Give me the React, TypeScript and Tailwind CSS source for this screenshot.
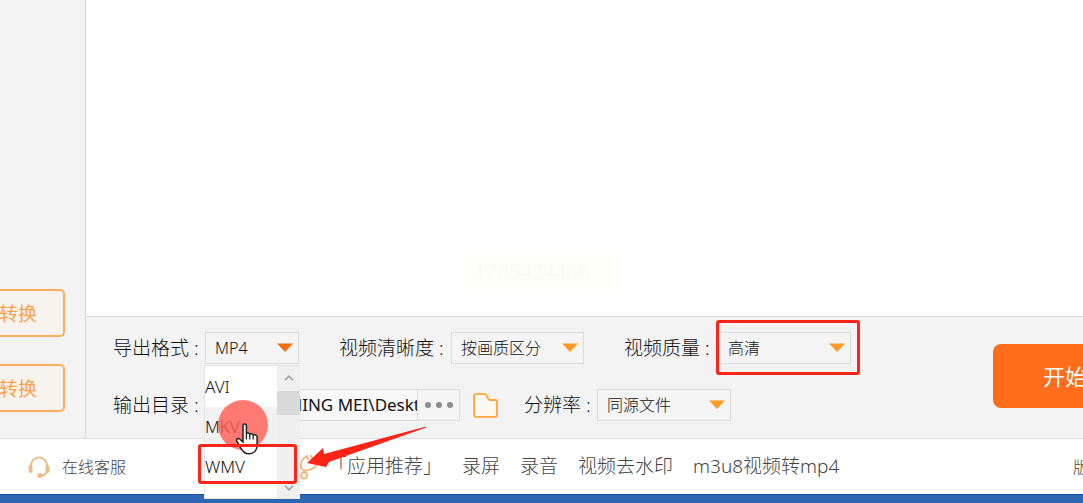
import type { ReactNode } from "react";

const links = ["录屏", "录音", "视频去水印", "m3u8视频转mp4"];
const formats = ["AVI", "MKV", "WMV"];

function Caret({ active }: { active?: boolean }) {
  return (
    <svg
      viewBox="0 0 16 9"
      className={
        active
          ? "pointer-events-none absolute right-[6px] top-[11px] h-[9px] w-4 text-[#f0700f]"
          : "pointer-events-none absolute right-[6px] top-[11px] h-[9px] w-4 text-[#ff9a26]"
      }
    >
      <path d="M0 0.5h16L8 9z" fill="currentColor" />
    </svg>
  );
}

function Field({
  id,
  label,
  value,
  labelClass,
  boxClass,
  active,
  children,
}: {
  id: string;
  label: string;
  value: string;
  labelClass: string;
  boxClass: string;
  active?: boolean;
  children?: ReactNode;
}) {
  return (
    <div className="flex items-center">
      <label htmlFor={id} className={`${labelClass} shrink-0 whitespace-nowrap text-[19px]`}>
        {label} :
      </label>
      <div className={`${boxClass} relative h-8 shrink-0`}>
        <select
          id={id}
          defaultValue={value}
          className="block h-8 w-full appearance-none border border-[#dcdcdc] bg-[#f5f5f5] pl-[9px] text-base leading-[30px] outline-none"
        >
          <option>{value}</option>
        </select>
        <Caret active={active} />
        {children}
      </div>
    </div>
  );
}

function FormatMenu() {
  return (
    <div className="absolute -left-px top-[33px] z-10 flex h-[134px] w-24 border border-r-0 border-[#e4e4e4] bg-white">
      <ul role="listbox" className="flex-1 pt-px">
        {formats.map((f) => (
          <li
            key={f}
            role="option"
            aria-selected={f === "MKV"}
            className="h-10 text-[17px] leading-10 aria-selected:bg-[#f2f2f2]"
          >
            {f}
          </li>
        ))}
      </ul>
      <div className="flex w-[23px] flex-col items-center bg-[#f0f0f0] text-[#a0a0a0]">
        <svg viewBox="0 0 10 6" className="mt-[9px] h-[6px] w-[10px]" fill="none" stroke="currentColor" strokeWidth="1.6">
          <path d="M1 5.2 5 1.2l4 4" />
        </svg>
        <div className="mt-[10px] h-6 w-full bg-[#dadada]" />
        <svg viewBox="0 0 10 6" className="mb-[7px] mt-auto h-[6px] w-[10px]" fill="none" stroke="currentColor" strokeWidth="1.6">
          <path d="M1 0.8 5 4.8l4-4" />
        </svg>
      </div>
      <div className="absolute left-[13px] top-[34px] size-[50px] rounded-full bg-[#ff5a50]/80" />
      <svg viewBox="0 0 24 32" className="absolute left-[30px] top-[57px] h-8 w-6">
        <path
          d="M8 2.5c0-2 3.4-2 3.4 0v8c.8-1 3.2-.7 3.4.8.8-.9 3.1-.6 3.4.9.9-.8 3.9-.4 3.9 1.4v8.2c0 5.4-3 9-8.3 9-4.2 0-6-2.100-7.700-5.200L1.700 18c-1.100-2 1.800-3.300 3.300-1.700l3 3z"
          fill="#fff"
          stroke="#222"
          strokeWidth="1.5"
          strokeLinejoin="round"
        />
        <path d="M11.4 10.5v6M14.8 11.5v5M18.2 12.5v4" stroke="#222" strokeWidth="1.3" />
      </svg>
      <div className="absolute -left-[7px] top-[78px] h-10 w-[99px] rounded-[3px] border-[3px] border-[#ff2418]" />
      <svg viewBox="0 0 120 42" className="absolute left-[102px] top-[60px] h-[42px] w-[120px]">
        <path d="M0 37 16 22l1 6L119 .5v1L22 36l-3 5z" fill="#ff2418" />
      </svg>
    </div>
  );
}

export default function App() {
  return (
    <div className="flex h-screen flex-col overflow-hidden bg-white font-['Noto_Sans','Noto_Sans_CJK_SC',sans-serif] font-light text-[#111]">
      <div className="flex min-h-0 flex-1">
        <aside className="flex w-[86px] shrink-0 flex-col items-start justify-end gap-[27px] border-r border-[#d6d6d6] bg-[#f3f3f3] pb-[26px]">
          {[0, 1].map((i) => (
            <button
              key={i}
              className="-ml-2 h-12 w-[73px] rounded-[5px] border-2 border-[#ffac5c] bg-[#f7f4f0] pl-[5px] pt-[3px] text-left text-[19px] font-normal text-[#ffa04a]"
            >
              转换
            </button>
          ))}
        </aside>

        <main className="flex min-w-0 flex-1 flex-col">
          <div className="flex flex-1 items-end justify-center pb-[25px] pr-[86px]">
            <p className="h-[38px] w-[158px] bg-[#fffffa] pl-3 font-['Liberation_Serif',serif] text-[23px] leading-[38px] text-[#fafaf5]">
              1765424436
            </p>
          </div>

          <section className="relative flex h-[122px] shrink-0 border-t border-[#d9d9d9] bg-[#f3f3f3] pl-[27px]">
            <div className="flex flex-col gap-[25px] pt-[15px]">
              <div className="flex gap-10">
                <Field id="format" label="导出格式" value="MP4" labelClass="w-[92px]" boxClass="w-[94px]" active>
                  <FormatMenu />
                </Field>
                <Field id="clarity" label="视频清晰度" value="按画质区分" labelClass="w-[112px]" boxClass="w-[133px]" />
                <Field id="quality" label="视频质量" value="高清" labelClass="w-[94px]" boxClass="w-[133px]">
                  <div className="pointer-events-none absolute -left-[2px] -top-3 h-[55px] w-36 rounded-[3px] border-[3px] border-[#ff2418]" />
                </Field>
              </div>
              <div className="flex items-center">
                <label htmlFor="folder" className="w-[92px] shrink-0 whitespace-nowrap text-[19px]">
                  输出目录 :
                </label>
                <div className="flex h-8 w-[255px] border border-[#dcdcdc] bg-[#f8f8f8]">
                  <input
                    id="folder"
                    defaultValue="C:\Users\NING MEI\Desktop"
                    className="min-w-0 flex-1 pl-[10px] text-[17px] font-normal outline-none"
                  />
                  <button
                    aria-label="浏览"
                    className="flex w-[42px] items-center justify-center gap-[5px] border-l border-[#dcdcdc] bg-[#f5f5f5]"
                  >
                    <i className="size-[6px] rounded-full bg-[#8c8c8c]" />
                    <i className="size-[6px] rounded-full bg-[#8c8c8c]" />
                    <i className="size-[6px] rounded-full bg-[#8c8c8c]" />
                  </button>
                </div>
                <button aria-label="打开目录" className="ml-[13px] mr-[26px]">
                  <svg viewBox="0 0 25 25" className="size-[25px]" fill="#fdf8f0" stroke="#ffa63c" strokeWidth="1.8">
                    <path d="M3 1.200h8.800q1 0 1.500 1L15.500 6q.6 1 1.600 1h5.100q1.800 0 1.800 1.800V22q0 1.900-1.800 1.900H3Q1.100 23.900 1.100 22V3Q1.100 1.200 3 1.200z" />
                  </svg>
                </button>
                <Field id="resolution" label="分辨率" value="同源文件" labelClass="w-[73px]" boxClass="w-[134px]" />
              </div>
            </div>
            <button className="ml-auto mt-[27px] h-16 w-[90px] shrink-0 overflow-hidden whitespace-nowrap rounded-l-lg bg-[#ff6d1a] pl-[50px] text-left text-[22px] font-normal text-white">
              开始
            </button>
          </section>
        </main>
      </div>

      <footer className="flex h-14 shrink-0 items-center border-t border-[#dcdcdc] bg-white pl-7 text-[19px] text-[#444]">
        <a href="#service" className="flex w-[270px] shrink-0 items-center gap-3 text-base">
          <svg viewBox="0 0 22 22" className="size-[22px]" fill="none" stroke="#e9bd85" strokeWidth="2">
            <path d="M3 11V9.500a8 8 0 0 1 16 0V11M19 15c-.7 3-3 4.600-6 5" />
            <path d="M2.500 11v4M19.500 11v4" strokeWidth="4" strokeLinecap="round" />
            <circle cx="12" cy="19.500" r="1.500" fill="#e9bd85" />
          </svg>
          在线客服
        </a>
        <svg viewBox="0 0 26 28" className="h-7 w-[26px] shrink-0" fill="none" stroke="#eebc86" strokeWidth="2">
          <path d="M5 17C2 15 2 9 6 5l3-2 1 4M12 2l3 4 4-4M15 6c5 0 6 3 3 7-3 3-8 5-13 4l3 3" />
          <circle cx="6" cy="22.500" r="3" />
        </svg>
        <nav className="ml-1 flex gap-5 whitespace-nowrap">
          <a href="#apps">「应用推荐」</a>
          {links.map((l) => (
            <a key={l} href="#apps">
              {l}
            </a>
          ))}
        </nav>
        <span className="ml-auto w-[10px] shrink-0 overflow-hidden whitespace-nowrap text-base">版</span>
      </footer>
      <div className="h-[9px] shrink-0 border-t border-[#1d5299] bg-[#2d67b1]" />
    </div>
  );
}
